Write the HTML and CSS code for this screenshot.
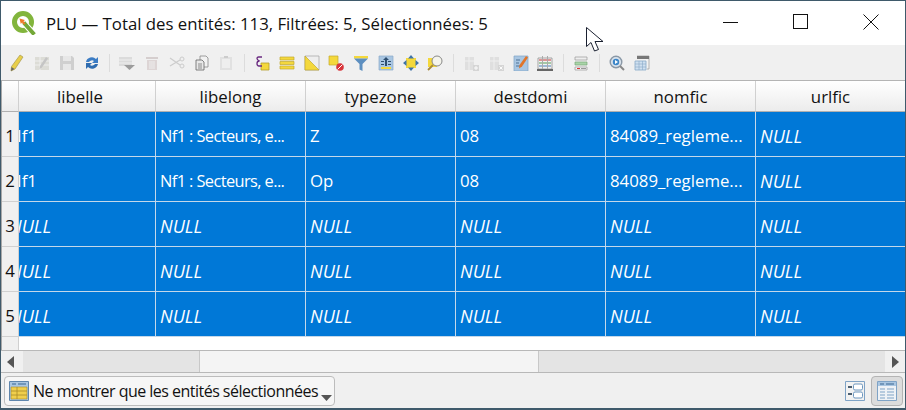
FILE: index.html
```html
<!DOCTYPE html>
<html lang="fr">
<head>
    <meta charset="UTF-8">
    <title>PLU — Total des entités</title>
    <link rel="stylesheet" href="styles.css">
</head>
<body>
<div class="window">
    <div class="titlebar">
        <svg class="logo" width="24" height="24" viewBox="0 0 24 24">
            <circle cx="11" cy="11" r="8.500" fill="#fff" stroke="#82b53c" stroke-width="5"/>
            <path d="M12 12l9 10" stroke="#fff" stroke-width="6"/>
            <path d="M13 13l8 9" stroke="#74a838" stroke-width="4" stroke-linecap="square"/>
            <path d="M7.500 7.500l5.500 1.500-1.500 1.200 2 2.300-1.500 1.200-2-2.300-1.200 1.500z" fill="#ef7a2a"/>
        </svg>
        <span class="title">PLU — Total des entités: 113, Filtrées: 5, Sélectionnées: 5</span>
        <div class="winbtns">
            <svg width="16" height="16" viewBox="0 0 16 16"><path d="M0 8.500h15" stroke="#111" fill="none"/></svg>
            <svg width="16" height="16" viewBox="0 0 16 16"><rect x=".5" y=".5" width="14" height="14" stroke="#111" fill="none"/></svg>
            <svg width="16" height="16" viewBox="0 0 16 16"><path d="M.5.500l15 15M15.500.500l-15 15" stroke="#111" fill="none"/></svg>
        </div>
    </div>

    <div class="toolbar">
        <span class="tool"><svg width="16" height="18" viewBox="0 0 16 18"><path d="M11 1l3 2-8 12-4 2 .5-4.500z" fill="#e8cf4a" stroke="#a89a50" stroke-width=".7"/><path d="M2.500 13l3 2-3.500 2z" fill="#666"/></svg></span>
        <span class="tool off"><svg width="16" height="16" viewBox="0 0 16 16"><path d="M1 2h14v13H1z" fill="#d8d8d0"/><path d="M1 6h14M1 10h14M6 2v13" stroke="#eee"/><path d="M12 2l2 1.500-6 9-2.500 1.500.5-3z" fill="#bbb"/></svg></span>
        <span class="tool off"><svg width="16" height="16" viewBox="0 0 16 16"><path d="M1 1h12l2 2v12H1z" fill="#c8c8c8"/><path d="M4 1h8v5H4zM4 9h8v6H4z" fill="#e6e6e6"/></svg></span>
        <span class="tool"><svg width="16" height="16" viewBox="0 0 16 16"><path d="M2 7a6 6 0 0 1 10-3l2-2v6H8l2-2a3.500 3.500 0 0 0-5 1z" fill="#3b7cc4"/><path d="M14 9a6 6 0 0 1-10 3l-2 2V8h6l-2 2a3.500 3.500 0 0 0 5-1z" fill="#2f6cb0"/></svg></span>
        <span class="sep"></span>
        <span class="tool off"><svg width="18" height="16" viewBox="0 0 18 16"><path d="M1 2h13v9H1z" fill="#d6d6d6"/><path d="M1 5h13M1 8h13" stroke="#f0f0f0"/><path d="M6 10h11l-5.500 5z" fill="#888"/></svg></span>
        <span class="tool off"><svg width="16" height="16" viewBox="0 0 16 16"><path d="M2 2h12v2H2z" fill="#cfc6c6"/><path d="M3 5h10v10H3z" fill="#d9cfcf"/><path d="M6 6v8M8 6v8M10 6v8" stroke="#eee"/></svg></span>
        <span class="tool off"><svg width="16" height="16" viewBox="0 0 16 16"><path d="M1 3l10 7M1 11l10-6" stroke="#c4c4c4" stroke-width="1.200" fill="none"/><circle cx="13" cy="4" r="2" fill="none" stroke="#c4c4c4"/><circle cx="13" cy="11" r="2" fill="none" stroke="#c4c4c4"/></svg></span>
        <span class="tool"><svg width="14" height="16" viewBox="0 0 14 16"><path d="M5 1h6l2 2v9H5z" fill="#f2f2f2" stroke="#888" stroke-width=".8"/><path d="M1 5h6l2 2v8H1z" fill="#e8e8e8" stroke="#666" stroke-width=".8"/><path d="M3 9h4M3 11h4M3 13h4" stroke="#666" stroke-width=".7"/></svg></span>
        <span class="tool off"><svg width="14" height="16" viewBox="0 0 14 16"><path d="M1 2h12v13H1z" fill="#dedede"/><path d="M3 4h8v9H3z" fill="#eee"/><path d="M5 1h4v2H5z" fill="#c4c4c4"/></svg></span>
        <span class="sep"></span>
        <span class="tool"><svg width="16" height="16" viewBox="0 0 16 16"><path d="M7 8h8v7H7z" fill="#f4d83c" stroke="#b59f2c" stroke-width=".8"/><path d="M8 2H4.500Q3 2 3 3.500T5.500 6Q3 6 3 8.500T5 11h3" fill="none" stroke="#6a2a80" stroke-width="1.300"/></svg></span>
        <span class="tool"><svg width="16" height="16" viewBox="0 0 16 16"><path d="M1 2h14v3H1zM1 6.500h14v3H1zM1 11h14v3H1z" fill="#f4d83c" stroke="#c2a92e" stroke-width=".7"/></svg></span>
        <span class="tool"><svg width="16" height="16" viewBox="0 0 16 16"><path d="M1 1h14v14H1z" fill="#eee" stroke="#aaa" stroke-width=".8"/><path d="M1 1v14h14z" fill="#f4d83c" stroke="#c2a92e" stroke-width=".7"/></svg></span>
        <span class="tool"><svg width="16" height="16" viewBox="0 0 16 16"><path d="M1 1h9v9H1z" fill="#f4d83c" stroke="#c2a92e" stroke-width=".7"/><circle cx="12" cy="12" r="3.800" fill="#d8343a"/><path d="M9.500 14.500l5-5" stroke="#fff"/></svg></span>
        <span class="tool"><svg width="16" height="16" viewBox="0 0 16 16"><path d="M1 1h14v2.500H1z" fill="#f4d83c"/><path d="M1 3.500h14L9.500 9v7l-3-1.500V9z" fill="#5d8fc0"/></svg></span>
        <span class="tool"><svg width="16" height="16" viewBox="0 0 16 16"><path d="M1 1h14v14H1z" fill="#a9c6e2" stroke="#89a9c8" stroke-width=".7"/><path d="M3 12h10v2H3z" fill="#f4d83c"/><path d="M8 2l3 3H9v6H7V5H5zM3 6h3v1H3zM10 6h3v1h-3zM3 9h3v1H3zM10 9h3v1h-3z" fill="#2f4f70"/></svg></span>
        <span class="tool"><svg width="16" height="16" viewBox="0 0 16 16"><path d="M3 3h10v10H3z" fill="#f4d83c"/><path d="M8 0l3 3.500H5zM8 16l-3-3.500h6zM0 8l3.500-3v6zM16 8l-3.500 3V5z" fill="#3f73a8"/></svg></span>
        <span class="tool"><svg width="16" height="16" viewBox="0 0 16 16"><path d="M1 3h9v9H1z" fill="#f4d83c"/><path d="M6 10l-5 5" stroke="#a88a3a" stroke-width="1.800"/><circle cx="10" cy="6" r="5" fill="#f4f4ec" stroke="#888"/></svg></span>
        <span class="sep"></span>
        <span class="tool off"><svg width="16" height="16" viewBox="0 0 16 16"><path d="M2 2h9v13H2z" fill="#dcdcdc"/><path d="M6 2v13" stroke="#f0f0f0"/><path d="M2 6h9" stroke="#f0f0f0"/><path d="M10 10h6v6h-6z" fill="#cfcfcf"/><path d="M13 11v4M11 13h4" stroke="#fff"/></svg></span>
        <span class="tool off"><svg width="16" height="16" viewBox="0 0 16 16"><path d="M2 2h9v13H2z" fill="#dcdcdc"/><path d="M6 2v13" stroke="#f0f0f0"/><path d="M2 6h9" stroke="#f0f0f0"/><path d="M10 10h6v6h-6z" fill="#cfcfcf"/><path d="M11.500 11.500l3 3M14.500 11.500l-3 3" stroke="#fff"/></svg></span>
        <span class="tool"><svg width="16" height="16" viewBox="0 0 16 16"><path d="M1 1h14v15H1z" fill="#a9c6e2" stroke="#7fa3c6" stroke-width=".7"/><path d="M3 5h4M3 8h3M3 11h5" stroke="#4c7297"/><path d="M13 1l2 1.500-6 9-3 2 .5-3.500z" fill="#e0752a"/></svg></span>
        <span class="tool"><svg width="16" height="16" viewBox="0 0 16 16"><path d="M1 3h14v11H1z" fill="#f2f2f2" stroke="#888" stroke-width=".7"/><path d="M0 14h16v2H0z" fill="#666"/><path d="M5.500 1v13M10.500 1v13" stroke="#aaa"/><path d="M2 5h3M6 5h4M11 5h3" stroke="#c83a3a"/><path d="M2 8h3M6 8h4M11 8h3" stroke="#58a058"/><path d="M2 11h3M6 11h4M11 11h3" stroke="#4a80b8"/></svg></span>
        <span class="sep"></span>
        <span class="tool"><svg width="16" height="16" viewBox="0 0 16 16"><path d="M2 2h12v3H2z" fill="#eee" stroke="#999" stroke-width=".7"/><path d="M2 7h12v3H2z" fill="#a8d4a8" stroke="#7aa87a" stroke-width=".7"/><path d="M2 12h12v3H2z" fill="#f4f4f4" stroke="#999" stroke-width=".7"/><path d="M4 13.500h3" stroke="#d33"/><path d="M8 13.500h5" stroke="#999"/></svg></span>
        <span class="sep"></span>
        <span class="tool"><svg width="16" height="16" viewBox="0 0 16 16"><circle cx="7" cy="7" r="5.800" fill="#d8e2ec" stroke="#8a98a6" stroke-width="1.400"/><circle cx="7" cy="7" r="3.200" fill="#3c86c8"/><path d="M6 5l3 2-3 2z" fill="#fff"/><path d="M11 11l4 4" stroke="#888" stroke-width="2"/></svg></span>
        <span class="tool"><svg width="16" height="16" viewBox="0 0 16 16"><path d="M3 1h12v13h-2" fill="#f2f2f2" stroke="#999" stroke-width=".7"/><path d="M3 1h12v3H3z" fill="#777"/><path d="M1 6h11v9H1z" fill="#cfe0f0" stroke="#89a9c8" stroke-width=".8"/><path d="M1 9h11M1 12h11M5 6v9M8.500 6v9" stroke="#89a9c8" stroke-width=".6"/></svg></span>
    </div>

    <div class="grid">
        <div class="head corner"></div>
        <div class="head first-head">libelle</div>
        <div class="head">libelong</div>
        <div class="head">typezone</div>
        <div class="head">destdomi</div>
        <div class="head">nomfic</div>
        <div class="head">urlfic</div>

        <div class="rownum">1</div>
        <div class="cell first"><span>Nf1</span></div>
        <div class="cell"><span class="tight">Nf1 : Secteurs, e...</span></div>
        <div class="cell"><span>Z</span></div>
        <div class="cell"><span>08</span></div>
        <div class="cell"><span>84089_regleme...</span></div>
        <div class="cell null"><span>NULL</span></div>

        <div class="rownum">2</div>
        <div class="cell first"><span>Nf1</span></div>
        <div class="cell"><span class="tight">Nf1 : Secteurs, e...</span></div>
        <div class="cell"><span>Op</span></div>
        <div class="cell"><span>08</span></div>
        <div class="cell"><span>84089_regleme...</span></div>
        <div class="cell null"><span>NULL</span></div>

        <div class="rownum">3</div>
        <div class="cell first null"><span>NULL</span></div>
        <div class="cell null"><span>NULL</span></div>
        <div class="cell null"><span>NULL</span></div>
        <div class="cell null"><span>NULL</span></div>
        <div class="cell null"><span>NULL</span></div>
        <div class="cell null"><span>NULL</span></div>

        <div class="rownum">4</div>
        <div class="cell first null"><span>NULL</span></div>
        <div class="cell null"><span>NULL</span></div>
        <div class="cell null"><span>NULL</span></div>
        <div class="cell null"><span>NULL</span></div>
        <div class="cell null"><span>NULL</span></div>
        <div class="cell null"><span>NULL</span></div>

        <div class="rownum">5</div>
        <div class="cell first null"><span>NULL</span></div>
        <div class="cell null"><span>NULL</span></div>
        <div class="cell null"><span>NULL</span></div>
        <div class="cell null"><span>NULL</span></div>
        <div class="cell null"><span>NULL</span></div>
        <div class="cell null"><span>NULL</span></div>

        <div class="rownum filler"></div>
        <div class="blank"></div>
    </div>

    <div class="scrollbar">
        <span class="arrow"><svg width="8" height="12" viewBox="0 0 8 12"><path d="M7 0v12L0 6z" fill="#555"/></svg></span>
        <span class="track left"></span>
        <span class="thumb"></span>
        <span class="track right"></span>
        <span class="arrow end"><svg width="8" height="12" viewBox="0 0 8 12"><path d="M1 0v12l7-6z" fill="#555"/></svg></span>
    </div>

    <div class="bottombar">
        <div class="filterbtn">
            <svg width="20" height="20" viewBox="0 0 20 20"><path d="M.5.500h19v19H.5z" fill="#a9c6e2" stroke="#5f86ad"/><path d="M2 6h16v12H2z" fill="#f0cf4c" stroke="#a88a2a" stroke-width=".6"/><path d="M2 10h16M2 14h16M8 6v12" stroke="#a88a2a" stroke-width=".8"/><path d="M3 3h4M9 3h8" stroke="#5f86ad" stroke-width="1.400"/></svg>
            <span>Ne montrer que les entités sélectionnées</span>
            <svg class="drop" width="11" height="6" viewBox="0 0 11 6"><path d="M0 0h11L5.500 6z" fill="#555"/></svg>
        </div>
        <div class="views">
            <span class="view"><svg width="20" height="20" viewBox="0 0 20 20"><path d="M.5.500h19v19H.5z" fill="#f2f2f2" stroke="#7fa3c6"/><path d="M3 5h4v2H3zM3 12h4v2H3z" fill="#4c5f70"/><rect x="8.500" y="3" width="9" height="6" rx="1.500" fill="#fff" stroke="#6c96be"/><rect x="8.500" y="11" width="9" height="6" rx="1.500" fill="#fff" stroke="#6c96be"/></svg></span>
            <span class="view active"><svg width="20" height="20" viewBox="0 0 20 20"><path d="M.5.500h19v19H.5z" fill="#eef2f6" stroke="#7fa3c6"/><path d="M1 1h18v4H1z" fill="#a9c6e2"/><path d="M3 3h4M9 3h8" stroke="#5f86ad" stroke-width="1.400"/><path d="M3 8h5M10 8h7M3 11h5M10 11h7M3 14h5M10 14h7M3 17h5M10 17h7" stroke="#7fa3c6"/></svg></span>
        </div>
    </div>

    <svg class="cursor" width="18" height="27" viewBox="0 0 18 27"><path d="M.5.500V19.500L5 15.500 8.500 24 12.500 22.500 9 14.500H17z" fill="#fff" stroke="#1a2030"/></svg>
</div>
</body>
</html>
```

FILE: styles.css
```css
* {
    box-sizing: border-box;
}

body {
    margin: 0;
    font-family: "Open Sans", sans-serif;
    font-size: 16.8px;
    color: #111;
}

.window {
    position: relative;
    width: 906px;
    height: 410px;
    border: 1px solid #3f5a6b;
    border-bottom-width: 2px;
    background: #f0f0f0;
    display: flex;
    flex-direction: column;
    overflow: hidden;
}

/* title */
.titlebar {
    height: 44px;
    flex: none;
    background: #fff;
    display: flex;
    align-items: center;
    padding-left: 11px;
}

.logo {
    margin-right: 10px;
}

.title {
    flex: 1;
    white-space: nowrap;
}

.winbtns {
    display: flex;
    gap: 54px;
    padding-right: 26px;
    padding-bottom: 2px;
    align-items: center;
}

/* toolbar */
.toolbar {
    height: 35px;
    flex: none;
    display: flex;
    align-items: center;
    padding-left: 4px;
}

.tool {
    width: 24.75px;
    height: 24px;
    flex: none;
    display: flex;
    align-items: center;
    justify-content: center;
}

.tool.off svg {
    opacity: .8;
}

.sep {
    width: 1px;
    height: 18px;
    margin: 0 5px;
    background: #dcdcdc;
    flex: none;
}

/* table */
.grid {
    flex: none;
    display: grid;
    grid-template-columns: 17px 137px repeat(5, 150px);
    grid-template-rows: 31px repeat(5, 45px) 13px;
    border-top: 1px solid #b4b4b4;
    border-left: 1px solid #a8a8a8;
    background: #fff;
}

.head {
    background: linear-gradient(#fff, #ececec);
    border-right: 1px solid #d0d0d0;
    border-bottom: 1px solid #b0b0b0;
    display: flex;
    align-items: center;
    justify-content: center;
}

.first-head {
    padding-right: 14px;
}

.rownum {
    background: #f0f0f0;
    border-right: 1px solid #d0d0d0;
    border-bottom: 1px solid #d0d0d0;
    padding-top: 3px;
    display: flex;
    align-items: center;
    justify-content: center;
}

.filler {
    border-bottom: 0;
}

.blank {
    grid-column: 2 / -1;
    background: #fff;
}

.cell {
    background: #0078d7;
    color: #fff;
    border-right: 1px solid #c4d8ea;
    border-bottom: 1px solid #c4d8ea;
    padding: 3px 0 0 4px;
    display: flex;
    align-items: center;
    white-space: nowrap;
    overflow: hidden;
}

.cell.first {
    padding-left: 0;
}

.cell.first span {
    margin-left: -10px;
}

.null {
    font-style: italic;
    font-size: 18px;
}

.tight {
    font-size: 16.4px;
    letter-spacing: -.6px;
}

/* scrollbar */
.scrollbar {
    height: 23px;
    flex: none;
    display: flex;
    border-top: 1px solid #b8b8b8;
    border-bottom: 1px solid #b8b8b8;
    background: #f0f0f0;
}

.arrow {
    width: 20px;
    flex: none;
    display: flex;
    align-items: center;
    justify-content: center;
    background: #f0f0f0;
}

.track {
    background: #e4e4e4;
}

.track.left {
    width: 176px;
    margin-left: 2px;
}

.track.right {
    flex: 1;
}

.thumb {
    width: 340px;
    background: #f4f4f4;
    border-left: 1px solid #c8c8c8;
    border-right: 1px solid #c8c8c8;
}

/* bottom */
.bottombar {
    flex: 1;
    display: flex;
    align-items: center;
    justify-content: space-between;
    padding: 0 2px 0 3px;
}

.filterbtn {
    width: 331px;
    height: 30px;
    border: 1px solid #bcbcbc;
    border-radius: 4px;
    background: #f6f6f6;
    display: flex;
    align-items: center;
    padding-left: 4px;
    position: relative;
}

.filterbtn span {
    margin-left: 4px;
    white-space: nowrap;
    font-size: 16px;
    letter-spacing: -.52px;
}

.drop {
    position: absolute;
    right: 2px;
    bottom: 4px;
}

.views {
    display: flex;
    align-items: center;
    gap: 6px;
}

.view {
    display: flex;
    align-items: center;
    justify-content: center;
}

.view.active {
    width: 32px;
    height: 30px;
    background: #dcdcdc;
    border: 1px solid #b4b4b4;
    border-radius: 4px;
}

.cursor {
    position: absolute;
    left: 585px;
    top: 26px;
}
```
